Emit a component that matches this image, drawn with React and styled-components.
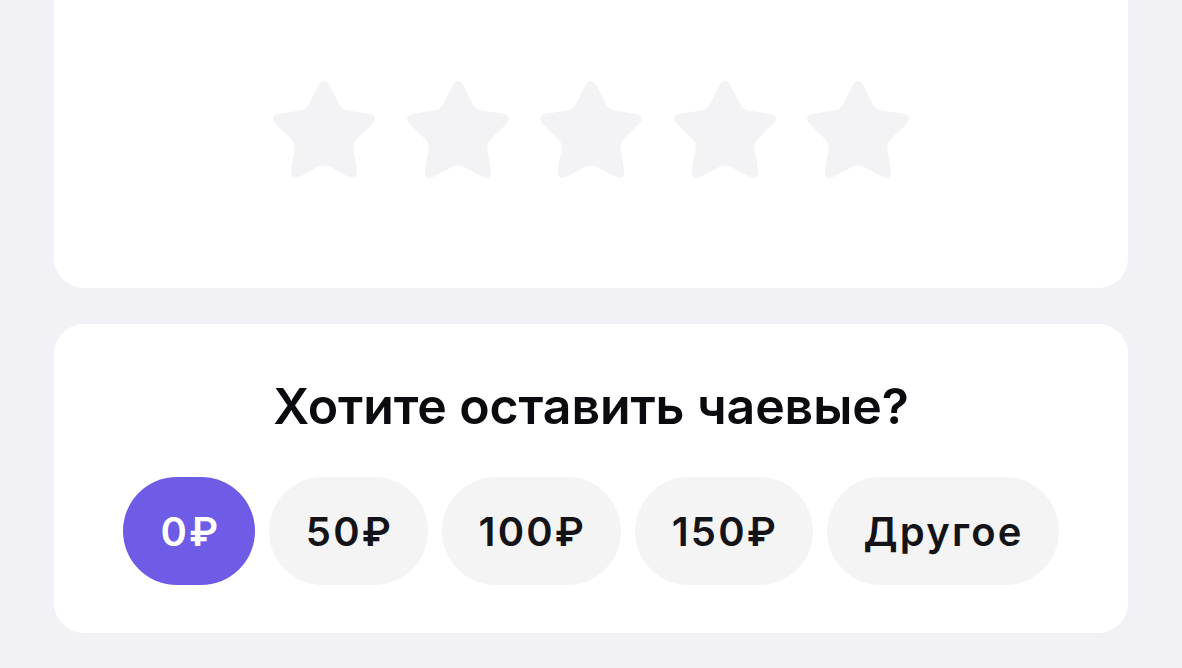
import React, { useState } from "react";
import styled, { createGlobalStyle } from "styled-components";

const Global = createGlobalStyle`
  html, body { margin: 0; padding: 0; background: #f1f1f6; }
  body { font-family: Inter, "Noto Sans", "Liberation Sans", sans-serif; -webkit-font-smoothing: antialiased; }
`;

const Page = styled.div`
  width: 1182px;
  height: 668px;
  overflow: hidden;
  background: #f1f1f6;
  display: flex;
  flex-direction: column;
  align-items: center;
  gap: 36px;
`;

const Card = styled.section`
  width: 1074px;
  box-sizing: border-box;
  background: #ffffff;
  border-radius: ${(p) => (p.$cutTop ? "0 0 30px 30px" : "30px")};
  display: flex;
  flex-direction: column;
  align-items: center;
`;

const RatingCard = styled(Card)`
  height: 288px;
  padding-top: 80px;
`;

const TipsCard = styled(Card)`
  height: 309px;
  padding-top: 53px;
`;

const Stars = styled.div`
  display: flex;
  gap: 33.5px;
`;

const StarIcon = styled.svg`
  width: 100px;
  height: 97px;
  display: block;
  overflow: visible;
`;

const Title = styled.h2`
  margin: 0;
  font-size: 50px;
  line-height: 58px;
  font-weight: 600;
  color: #0b0b0f;
  letter-spacing: -0.1px;
`;

const Chips = styled.div`
  display: flex;
  gap: 13.5px;
  margin-top: 42px;
`;

const Chip = styled.button`
  height: 108px;
  padding: 0 35px 0 37px;
  border: none;
  border-radius: 54px;
  font-family: Inter, "Noto Sans", sans-serif;
  font-size: 40px;
  font-weight: 600;
  letter-spacing: 2.2px;
  background: ${(p) => (p.$active ? "#6e5be6" : "#f4f4f5")};
  color: ${(p) => (p.$active ? "#ffffff" : "#141418")};
  display: flex;
  align-items: center;
  justify-content: center;
  cursor: pointer;
`;

function buildStarPath() {
  const cx = 50;
  const cy = 54;
  const R = 60;
  const r = 30;
  const pts = [];
  for (let i = 0; i < 10; i++) {
    const a = (Math.PI / 5) * i - Math.PI / 2;
    const rad = i % 2 === 0 ? R : r;
    pts.push([cx + rad * Math.cos(a), cy + rad * Math.sin(a), i % 2 === 0]);
  }
  const lerp = (p, q, d) => {
    const dx = q[0] - p[0];
    const dy = q[1] - p[1];
    const len = Math.hypot(dx, dy);
    return [p[0] + (dx / len) * d, p[1] + (dy / len) * d];
  };
  let d = "";
  pts.forEach((p, i) => {
    const prev = pts[(i + 9) % 10];
    const next = pts[(i + 1) % 10];
    const rr = p[2] ? 15 : 6;
    const a = lerp(p, prev, rr);
    const b = lerp(p, next, rr);
    d += (i === 0 ? "M" : "L") + a[0].toFixed(2) + " " + a[1].toFixed(2);
    d += "Q" + p[0].toFixed(2) + " " + p[1].toFixed(2) + " " + b[0].toFixed(2) + " " + b[1].toFixed(2);
  });
  return d + "Z";
}

const STAR_D = buildStarPath();

const Star = () => (
  <StarIcon viewBox="0 0 100 97">
    <path d={STAR_D} fill="#f3f3f6" />
  </StarIcon>
);

const amounts = ["0₽", "50₽", "100₽", "150₽", "Другое"];

export default function App() {
  const [selected, setSelected] = useState(0);
  return (
    <>
      <Global />
      <Page>
        <RatingCard $cutTop>
          <Stars>
            {[0, 1, 2, 3, 4].map((i) => (
              <Star key={i} />
            ))}
          </Stars>
        </RatingCard>
        <TipsCard>
          <Title>Хотите оставить чаевые?</Title>
          <Chips>
            {amounts.map((a, i) => (
              <Chip key={a} $active={selected === i} onClick={() => setSelected(i)}>
                {a}
              </Chip>
            ))}
          </Chips>
        </TipsCard>
      </Page>
    </>
  );
}
